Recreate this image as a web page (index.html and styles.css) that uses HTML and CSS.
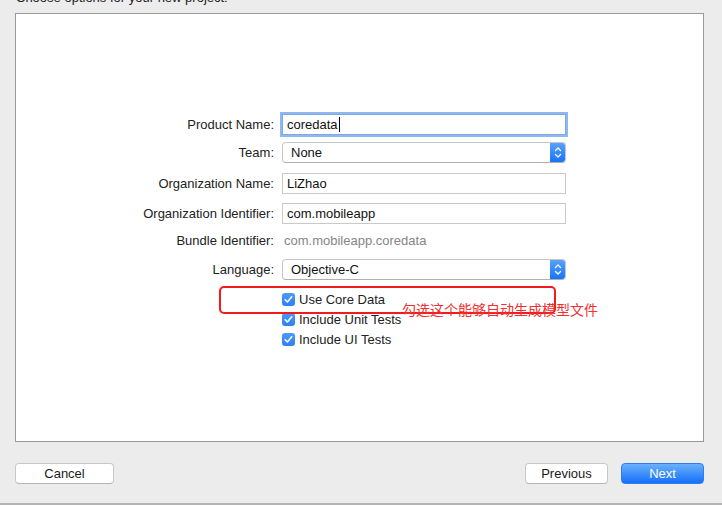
FILE: index.html
```html
<!DOCTYPE html>
<html>
<head>
<meta charset="utf-8">
<link rel="stylesheet" href="styles.css">
</head>
<body>
<div class="page">
  <div class="header">Choose options for your new project:</div>
  <div class="panel">
    <div class="form">
      <div class="row r-product">
        <div class="label">Product Name:</div>
        <div class="field focus">coredata<span class="caret"></span></div>
      </div>
      <div class="row r-team">
        <div class="label">Team:</div>
        <div class="popup"><span class="pv">None</span><span class="stepper"><svg width="8" height="13" viewBox="0 0 8 13"><path d="M1.5 4.5 L4 2 L6.5 4.5 M1.5 8.5 L4 11 L6.5 8.5" fill="none" stroke="#fff" stroke-width="1.3" stroke-linecap="round" stroke-linejoin="round"/></svg></span></div>
      </div>
      <div class="row r-org">
        <div class="label">Organization Name:</div>
        <div class="field">LiZhao</div>
      </div>
      <div class="row r-orgid">
        <div class="label">Organization Identifier:</div>
        <div class="field">com.mobileapp</div>
      </div>
      <div class="row r-bundle">
        <div class="label">Bundle Identifier:</div>
        <div class="static">com.mobileapp.coredata</div>
      </div>
      <div class="row r-lang">
        <div class="label">Language:</div>
        <div class="popup"><span class="pv">Objective-C</span><span class="stepper"><svg width="8" height="13" viewBox="0 0 8 13"><path d="M1.5 4.5 L4 2 L6.5 4.5 M1.5 8.5 L4 11 L6.5 8.5" fill="none" stroke="#fff" stroke-width="1.3" stroke-linecap="round" stroke-linejoin="round"/></svg></span></div>
      </div>
      <div class="checks">
        <div class="check"><span class="box"><svg width="13" height="13" viewBox="0 0 13 13"><path d="M3.2 6.8 L5.4 9 L9.8 3.8" fill="none" stroke="#fff" stroke-width="1.6" stroke-linecap="round" stroke-linejoin="round"/></svg></span>Use Core Data</div>
        <div class="check"><span class="box"><svg width="13" height="13" viewBox="0 0 13 13"><path d="M3.2 6.8 L5.4 9 L9.8 3.8" fill="none" stroke="#fff" stroke-width="1.6" stroke-linecap="round" stroke-linejoin="round"/></svg></span>Include Unit Tests</div>
        <div class="check"><span class="box"><svg width="13" height="13" viewBox="0 0 13 13"><path d="M3.2 6.8 L5.4 9 L9.8 3.8" fill="none" stroke="#fff" stroke-width="1.6" stroke-linecap="round" stroke-linejoin="round"/></svg></span>Include UI Tests</div>
      </div>
    </div>
    <div class="mark"></div>
    <div class="note">勾选这个能够自动生成模型文件</div>
  </div>
  <div class="buttons">
    <div class="btn cancel">Cancel</div>
    <div class="spacer"></div>
    <div class="btn prev">Previous</div>
    <div class="btn next">Next</div>
  </div>
</div>
</body>
</html>
```

FILE: styles.css
```css
html, body {
  margin: 0;
  padding: 0;
  background: #ececec;
  font-family: "Liberation Sans", Arial, "Noto Sans CJK SC", sans-serif;
  font-size: 13px;
  color: #1e1e1e;
  overflow: hidden;
}
.page {
  width: 722px;
  height: 505px;
  box-sizing: border-box;
  border-bottom: 2px solid #b4b4b4;
  padding: 0 18px 0 15px;
  display: flex;
  flex-direction: column;
}
.header {
  height: 13px;
  margin-top: -9px;
  line-height: 13px;
  padding-left: 1px;
  color: #222;
}
.panel {
  position: relative;
  margin-top: 9px;
  height: 429px;
  flex: none;
  box-sizing: border-box;
  background: #fff;
  border: 1px solid #999;
}
.form {
  padding-top: 100px;
  display: flex;
  flex-direction: column;
}
.row {
  display: flex;
  align-items: center;
  height: 21px;
}
.label {
  width: 258px;
  text-align: right;
  margin-right: 8px;
  color: #222;
}
.r-team { margin-top: 7px; }
.r-org { margin-top: 10px; }
.r-orgid { margin-top: 9px; }
.r-bundle { margin-top: 6px; }
.r-lang { margin-top: 8px; }
.field {
  width: 284px;
  height: 21px;
  box-sizing: border-box;
  border: 1px solid #c9c9c9;
  padding: 0 4px;
  line-height: 19px;
  color: #111;
  display: flex;
  align-items: center;
}
.field.focus {
  border: 1px solid #7fa9e0;
  box-shadow: 0 0 0 2px #8db8f2;
}
.caret {
  display: inline-block;
  width: 1px;
  height: 15px;
  background: #000;
  margin-left: 1px;
}
.static {
  color: #868686;
  padding-left: 2px;
}
.popup {
  width: 284px;
  height: 21px;
  box-sizing: border-box;
  border: 1px solid #c6c6c6;
  border-bottom-color: #b0b0b0;
  border-radius: 4px;
  display: flex;
  align-items: stretch;
  background: #fff;
  overflow: hidden;
}
.pv {
  flex: 1;
  padding-left: 8px;
  line-height: 19px;
  color: #111;
}
.stepper {
  width: 16px;
  background: linear-gradient(#5aa5fb, #1572f8);
  display: flex;
  align-items: center;
  justify-content: center;
  margin: -1px -1px -1px 0;
}
.checks {
  margin-top: 12px;
  padding-left: 266px;
  display: flex;
  flex-direction: column;
  gap: 6px;
}
.check {
  display: flex;
  align-items: center;
  height: 14px;
  color: #222;
}
.box {
  width: 13px;
  height: 13px;
  border-radius: 3px;
  background: linear-gradient(#4b9af9, #2d7ff6);
  margin-right: 4px;
  display: flex;
}
.mark {
  position: absolute;
  left: 203px;
  top: 272px;
  width: 337px;
  height: 28px;
  box-sizing: border-box;
  border: 2px solid #f21b1b;
  border-radius: 5px;
}
.note {
  position: absolute;
  left: 386px;
  top: 286px;
  font-size: 14px;
  color: #f03030;
  font-family: "Noto Sans CJK SC", sans-serif;
  line-height: 18px;
}
.buttons {
  display: flex;
  margin-top: 21px;
  height: 21px;
  flex: none;
}
.btn {
  height: 21px;
  box-sizing: border-box;
  border-radius: 4px;
  text-align: center;
  line-height: 19px;
  font-size: 13px;
}
.cancel, .prev {
  background: #fff;
  border: 1px solid #c8c8c8;
  border-bottom-color: #b5b5b5;
  color: #1a1a1a;
}
.cancel { width: 99px; }
.spacer { flex: 1; }
.prev { width: 83px; margin-right: 13px; }
.next {
  width: 83px;
  background: linear-gradient(#6ab0fb, #1470f9);
  border: 1px solid #2f7cf3;
  color: #fff;
}
```
